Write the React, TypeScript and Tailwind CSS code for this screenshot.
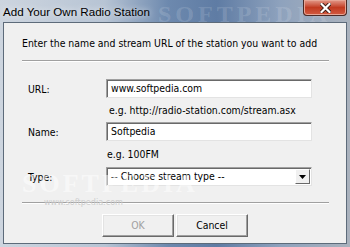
import React from "react";

const dlgFont = { fontFamily: '"DejaVu Sans Condensed", Tahoma, "Liberation Sans", sans-serif' };

function Sunken({ children, className = "" }: { children: React.ReactNode; className?: string }) {
  return (
    <div
      className={
        "flex h-[19px] w-[206px] items-center border border-t-[#a0a0a0] border-l-[#a0a0a0] border-r-[#e3e3e3] border-b-[#e3e3e3] bg-white shadow-[inset_1px_1px_0_#696969] " +
        className
      }
    >
      {children}
    </div>
  );
}

function Button({ label, disabled }: { label: string; disabled?: boolean }) {
  return (
    <div className="flex h-[23px] w-[72px] items-center justify-center border border-t-white border-l-white border-r-[#696969] border-b-[#696969] bg-[#f0f0f0] shadow-[inset_-1px_-1px_0_#a0a0a0,inset_1px_1px_0_#e3e3e3]">
      <span className={"text-[10.4px] " + (disabled ? "text-[#a0a0a0]" : "text-black")}>{label}</span>
    </div>
  );
}

function Separator({ className = "" }: { className?: string }) {
  return <div className={"ml-[18px] w-[307px] border-t border-b border-t-[#a0a0a0] border-b-white " + className} />;
}

export default function App() {
  return (
    <div className="relative h-[247px] w-[350px] overflow-hidden bg-[linear-gradient(90deg,#cdd5df_0%,#b7c4d4_30%,#6d89ae_48%,#5f7ca4_62%,#8ea2bd_80%,#aab2bd_100%)]">
      {/* title bar */}
      <div className="relative flex h-[22px] items-center pl-[3px]">
        <span
          className="pt-[1px] text-[11.6px] text-black [text-shadow:0_0_6px_rgba(255,255,255,0.9)]"
          style={{ fontFamily: '"Liberation Sans", Arial, sans-serif' }}
        >
          Add Your Own Radio Station
        </span>
        <span
          className="absolute left-[158px] top-[-4px] text-[24px] font-bold tracking-[4px] text-white/15"
          style={{ fontFamily: '"Liberation Serif", serif' }}
        >
          SOFTPEDIA
        </span>
        {/* close button */}
        <div className="relative z-10 ml-auto mr-[3px] mb-[6px] flex h-[16px] w-[44px] items-center justify-center rounded-b-[4px] border border-t-0 border-[#4b2a26] bg-[#c4432a] bg-linear-to-b from-[#e2988a] via-[#c13a20] to-[#d25a40] shadow-[inset_0_0_0_1px_#e7a595]">
          <svg width="11" height="10" viewBox="0 0 11 10">
            <path d="M1.5 1 L9.5 9 M9.5 1 L1.5 9" stroke="#3a1a14" strokeWidth="4" strokeLinecap="square" />
            <path d="M1.5 1 L9.5 9 M9.5 1 L1.5 9" stroke="#ffffff" strokeWidth="2.2" strokeLinecap="square" />
          </svg>
        </div>
      </div>

      {/* client area */}
      <div
        className="relative mx-[3px] h-[222px] border border-[#5d6b7a] bg-[#f0f0f0] text-[10.4px] text-black"
        style={dlgFont}
      >
        <div className="mt-[14px] h-[13px] pl-[18px] leading-[13px]">
          Enter the name and stream URL of the station you want to add
        </div>
        <Separator className="mt-[10px]" />

        <div className="mt-[17px] flex items-center">
          <span className="w-[102px] pl-[24px] pt-[3px]">URL:</span>
          <Sunken>
            <span className="pl-[4px]">www.softpedia.com</span>
          </Sunken>
        </div>
        <div className="mt-[6px] h-[13px] pl-[105px] leading-[13px]">e.g. http://radio-station.com/stream.asx</div>

        <div className="mt-[5px] flex items-center">
          <span className="w-[102px] pl-[24px] pt-[3px]">Name:</span>
          <Sunken>
            <span className="pl-[4px]">Softpedia</span>
          </Sunken>
        </div>
        <div className="mt-[7px] h-[13px] pl-[103px] leading-[13px]">e.g. 100FM</div>

        <div className="mt-[6px] flex items-center">
          <span className="w-[102px] pl-[24px] pt-[3px]">Type:</span>
          <Sunken className="justify-between">
            <span className="pl-[4px]">-- Choose stream type --</span>
            <div className="mr-[1px] flex h-[15px] w-[15px] items-center justify-center border border-t-white border-l-white border-r-[#696969] border-b-[#696969] bg-[#f0f0f0]">
              <svg width="7" height="4" viewBox="0 0 7 4">
                <path d="M0 0 H7 L3.5 4 Z" fill="#000" />
              </svg>
            </div>
          </Sunken>
        </div>

        <Separator className="mt-[16px]" />

        <div className="mt-[10px] flex justify-center gap-[2px]">
          <Button label="OK" disabled />
          <Button label="Cancel" />
        </div>

        {/* watermark */}
        <span
          className="pointer-events-none absolute left-[18px] top-[141px] text-[26px] font-bold tracking-[3px] text-white/50"
          style={{ fontFamily: '"Liberation Serif", serif' }}
        >
          SOFTPEDIA
        </span>
        <span className="pointer-events-none absolute left-[40px] top-[173px] text-[9px] text-[#cdcdcd]">
          www.softpedia.com
        </span>
      </div>
    </div>
  );
}
